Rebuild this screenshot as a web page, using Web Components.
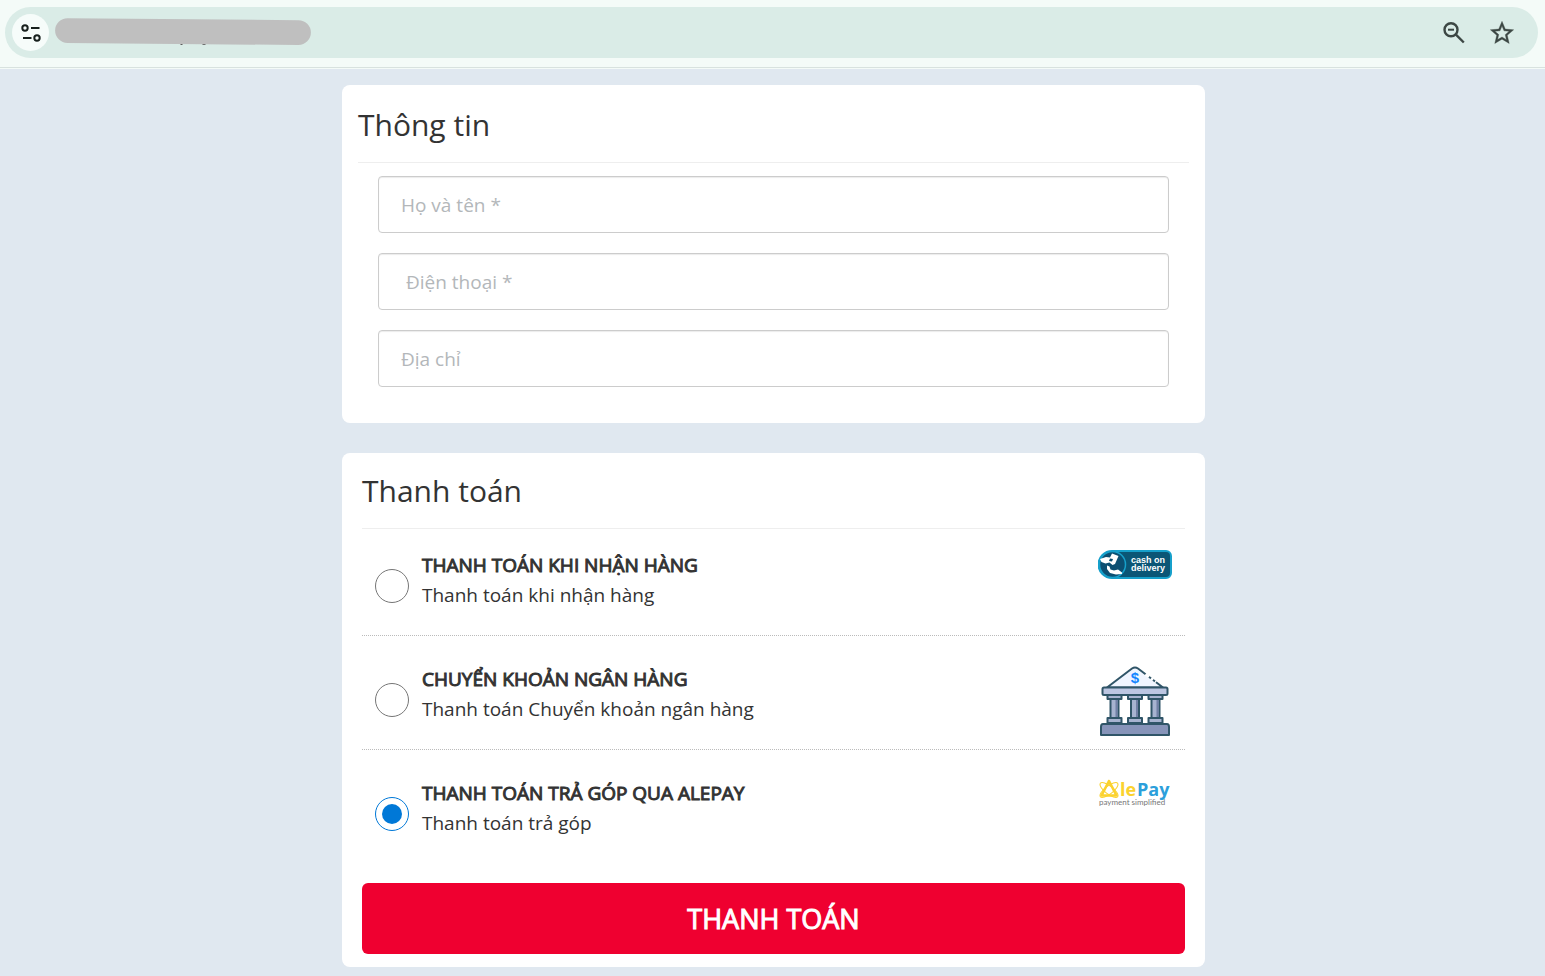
<!DOCTYPE html>
<html lang="vi">
<head>
    <meta charset="utf-8">
    <meta name="viewport" content="width=device-width, initial-scale=1">
    <title>Thanh toán</title>
    <style>
        body {
            margin: 0;
            min-height: 100vh;
            background: #e0e8f0;
            color: #333;
            font-family: "Open Sans", sans-serif;
            font-size: 19px;
            line-height: 30px;
        }
    </style>
</head>
<body>
    <browser-bar></browser-bar>
    <checkout-page>
        <checkout-card heading="Thông tin">
            <customer-form></customer-form>
        </checkout-card>
        <checkout-card heading="Thanh toán" class="payment">
            <payment-list>
                <payment-option value="cod">
                    <span slot="title">Thanh toán khi nhận hàng</span>
                    Thanh toán khi nhận hàng
                    <cod-logo slot="logo"></cod-logo>
                </payment-option>
                <payment-option value="bank">
                    <span slot="title">Chuyển khoản ngân hàng</span>
                    Thanh toán Chuyển khoản ngân hàng
                    <bank-logo slot="logo"></bank-logo>
                </payment-option>
                <payment-option value="alepay" checked>
                    <span slot="title">Thanh toán trả góp qua Alepay</span>
                    Thanh toán trả góp
                    <alepay-logo slot="logo"></alepay-logo>
                </payment-option>
            </payment-list>
            <pay-button>Thanh toán</pay-button>
        </checkout-card>
    </checkout-page>

    <script>
        class BrowserBar extends HTMLElement {
            constructor() {
                super();
                this.attachShadow({ mode: "open" });

                this.shadowRoot.innerHTML = `
                    <style>
                        :host {
                            display: block;
                            padding: 7px 7px 9px 5px;
                            background: #f4fbf8;
                            border-bottom: 1px solid #d8e2df;
                            box-shadow: 0 1px #f4fbf8;
                        }
                        .bar {
                            display: flex;
                            align-items: center;
                            height: 51px;
                            padding: 0 22px 0 7px;
                            border-radius: 26px;
                            background: #daece7;
                        }
                        button {
                            display: flex;
                            align-items: center;
                            justify-content: center;
                            width: 28px;
                            height: 28px;
                            padding: 0;
                            border: 0;
                            border-radius: 50%;
                            background: none;
                            color: #3c4744;
                        }
                        .site {
                            width: 37px;
                            height: 37px;
                            background: #f6fcfa;
                            color: #17201d;
                        }
                        .address {
                            flex: 1;
                            margin-left: 6px;
                        }
                        .address svg {
                            display: block;
                        }
                        .actions {
                            display: flex;
                            gap: 20px;
                        }
                    </style>
                    <div class="bar">
                        <button class="site" type="button" aria-label="Site information">
                            <svg width="20" height="20" viewBox="0 0 20 20" fill="none" stroke="currentColor" stroke-width="2">
                                <circle cx="4" cy="5" r="2.7"/>
                                <path d="M10 5h8.5M2 15h8.5"/>
                                <circle cx="16" cy="15" r="2.7"/>
                            </svg>
                        </button>
                        <div class="address">
                            <svg width="256" height="30" viewBox="0 0 256 30">
                                <path d="M125.500 24.500h2v2.500h-2zM147.500 24.500h3v2.500h-3z" fill="#555"/>
                                <path d="M12.500 .2L243.500 2.200A12.400 12.400 0 0 1 243.500 27L12.500 25A12.400 12.400 0 0 1 12.500 .2z" fill="#bfbfbf"/>
                            </svg>
                        </div>
                        <div class="actions">
                            <button type="button" aria-label="Zoom">
                                <svg width="28" height="28" viewBox="0 0 28 28" fill="none" stroke="currentColor" stroke-width="2.400">
                                    <circle cx="11" cy="10.700" r="6.500"/>
                                    <path d="M15.700 15.400L23.800 23.500"/>
                                    <path d="M8 10.700h6" stroke-width="2"/>
                                </svg>
                            </button>
                            <button type="button" aria-label="Bookmark">
                                <svg width="28" height="28" viewBox="0 0 24 24" fill="currentColor" stroke="currentColor" stroke-width=".3">
                                    <path d="M22 9.240l-7.190-.62L12 2 9.190 8.630 2 9.240l5.460 4.730L5.820 21 12 17.270 18.180 21l-1.630-7.030L22 9.240zM12 15.400l-3.760 2.270 1-4.280-3.320-2.880 4.380-.38L12 6.100l1.710 4.040 4.380.38-3.320 2.880 1 4.280L12 15.400z"/>
                                </svg>
                            </button>
                        </div>
                    </div>
                `;
            }
        }

        class CheckoutPage extends HTMLElement {
            constructor() {
                super();
                this.attachShadow({ mode: "open" });

                this.shadowRoot.innerHTML = `
                    <style>
                        :host {
                            display: block;
                            padding: 17px 15px 9px 17px;
                        }
                        main {
                            display: grid;
                            gap: 30px;
                            max-width: 863px;
                            margin: 0 auto;
                        }
                    </style>
                    <main><slot></slot></main>
                `;
            }
        }

        class CheckoutCard extends HTMLElement {
            constructor() {
                super();
                this.attachShadow({ mode: "open" });

                this.shadowRoot.innerHTML = `
                    <style>
                        :host {
                            display: block;
                            padding: 20px 16px 36px;
                            border-radius: 8px;
                            background: #fff;
                        }
                        :host(.payment) {
                            padding: 18px 20px 13px;
                        }
                        h2 {
                            margin: 0;
                            padding-bottom: 17px;
                            border-bottom: 1px solid #eee;
                            font-size: 30px;
                            font-weight: 400;
                            line-height: 40px;
                        }
                    </style>
                    <h2></h2>
                    <slot></slot>
                `;
            }

            connectedCallback() {
                this.shadowRoot.querySelector("h2").textContent = this.getAttribute("heading");
            }
        }

        class CustomerForm extends HTMLElement {
            constructor() {
                super();
                this.attachShadow({ mode: "open" });

                this.shadowRoot.innerHTML = `
                    <style>
                        :host {
                            display: block;
                        }
                        form {
                            display: grid;
                            gap: 20px;
                            padding: 13px 20px 0;
                        }
                        input {
                            box-sizing: border-box;
                            width: 100%;
                            height: 57px;
                            padding: 0 22px;
                            border: 1px solid #ccc;
                            border-radius: 4px;
                            background: #fff;
                            box-shadow: inset 0 1px 1px rgba(0, 0, 0, .08);
                            color: #333;
                            font: inherit;
                        }
                        input::placeholder {
                            color: #b3b7ba;
                            opacity: 1;
                        }
                    </style>
                    <form>
                        <input type="text" name="name" placeholder="Họ và tên *" aria-label="Họ và tên" required>
                        <input type="tel" name="phone" placeholder=" Điện thoại *" aria-label="Điện thoại" required>
                        <input type="text" name="address" placeholder="Địa chỉ" aria-label="Địa chỉ">
                    </form>
                `;
            }
        }

        class PaymentList extends HTMLElement {
            constructor() {
                super();
                this.attachShadow({ mode: "open" });

                this.shadowRoot.innerHTML = `
                    <style>
                        :host {
                            display: grid;
                            gap: 7px;
                            margin-bottom: 19px;
                        }
                    </style>
                    <slot></slot>
                `;
            }

            connectedCallback() {
                this.setAttribute("role", "radiogroup");
                // radios in separate shadow roots don't group by name
                this.addEventListener("option-select", (e) => {
                    this.querySelectorAll("payment-option").forEach((option) => {
                        option.checked = option === e.target;
                    });
                });
            }
        }

        class PaymentOption extends HTMLElement {
            constructor() {
                super();
                this.attachShadow({ mode: "open" });

                this.shadowRoot.innerHTML = `
                    <style>
                        :host {
                            display: flex;
                            justify-content: space-between;
                            align-items: flex-start;
                            padding: 21px 13px 0;
                            border-bottom: 1px dotted #bbb;
                        }
                        :host(:last-of-type) {
                            border-bottom-color: transparent;
                        }
                        label {
                            display: flex;
                            flex: 1;
                            align-items: flex-start;
                            gap: 13px;
                            padding-bottom: 25px;
                        }
                        input {
                            appearance: none;
                            box-sizing: border-box;
                            flex: none;
                            width: 34px;
                            height: 34px;
                            margin: 19px 0 0;
                            padding: 6px;
                            border: 1px solid #767676;
                            border-radius: 50%;
                        }
                        input:checked {
                            border-color: #0078d7;
                        }
                        input:checked::before {
                            content: "";
                            display: block;
                            height: 100%;
                            border-radius: 50%;
                            background: #0078d7;
                        }
                        .title {
                            display: block;
                            text-transform: uppercase;
                            -webkit-text-stroke: 1px currentColor;
                        }
                        .text {
                            display: block;
                        }
                    </style>
                    <label>
                        <input type="radio" name="payment">
                        <span>
                            <span class="title"><slot name="title"></slot></span>
                            <span class="text"><slot></slot></span>
                        </span>
                    </label>
                    <slot name="logo"></slot>
                `;
                this.input = this.shadowRoot.querySelector("input");
            }

            connectedCallback() {
                this.input.value = this.getAttribute("value");
                this.input.checked = this.hasAttribute("checked");
                this.input.addEventListener("change", () => {
                    this.dispatchEvent(new CustomEvent("option-select", { bubbles: true }));
                });
            }

            set checked(value) {
                this.input.checked = value;
            }
        }

        class CodLogo extends HTMLElement {
            constructor() {
                super();
                this.attachShadow({ mode: "open" });

                this.shadowRoot.innerHTML = `
                    <style>
                        :host, svg {
                            display: block;
                        }
                        text {
                            font: bold 9px "Liberation Sans", sans-serif;
                        }
                    </style>
                    <svg width="74" height="30" viewBox="0 0 74 30">
                        <path d="M14 1h54a5 5 0 0 1 5 5v17a5 5 0 0 1-5 5H14A13.500 13.500 0 0 1 14 1z" fill="#0b5676" stroke="#16a0cb" stroke-width="2"/>
                        <circle cx="14.500" cy="14.500" r="13" fill="#0b4f72" stroke="#16a0cb" stroke-width="1.500"/>
                        <path d="M2 9l6-2 4 .5 2-4 6.500 2.500-3.500 8-2.500 1-3-2.500-4 1-4-1.500z" fill="#fff"/>
                        <path d="M12 8.500l3 .5-1 2.500-3-.5z" fill="#0b4f72"/>
                        <path d="M9 15.500l2.500 1 1 3 3.500 1 4-1 4 3v1.500l-6 .5-6-1.500-3-4z" fill="#fff"/>
                        <g fill="#fff">
                            <text x="33" y="13">cash on</text>
                            <text x="33" y="21">delivery</text>
                        </g>
                    </svg>
                `;
            }
        }

        class BankLogo extends HTMLElement {
            constructor() {
                super();
                this.attachShadow({ mode: "open" });

                this.shadowRoot.innerHTML = `
                    <style>
                        :host, svg {
                            display: block;
                        }
                        text {
                            font: bold 15px "Liberation Sans", sans-serif;
                        }
                    </style>
                    <svg width="74" height="74" viewBox="0 0 74 74" fill="#a7b3d0" stroke="#305568" stroke-width="2" stroke-linejoin="round">
                        <path d="M9 23.500L34 4.500q3-2 6 0L65 23.500z" fill="#f0f5ff"/>
                        <path d="M47.500 10.200l3.500 2.700M53 14.400l2 1.500M57 17.400l1 .8" stroke="#fff" stroke-width="3"/>
                        <rect x="4.500" y="23.500" width="65" height="7.500" rx="1.500" fill="#bcc6e2"/>
                        <path d="M12.500 35h8v19h-8zM33 35h8v19h-8zM53.500 35h8v19h-8z"/>
                        <path d="M9.500 31h14v4h-14zM30 31h14v4H30zM50.500 31h14v4h-14z"/>
                        <path d="M9.500 54h14v5h-14zM30 54h14v5H30zM50.500 54h14v5h-14z"/>
                        <path d="M18.500 36v17M39 36v17M59.500 36v17" stroke="#7180a5"/>
                        <path d="M5 60h64q2 0 2 3v8H3v-8q0-3 2-3z" fill="#8794b9"/>
                        <text x="37" y="19" text-anchor="middle" fill="#1586ff" stroke="none">$</text>
                    </svg>
                `;
            }
        }

        class AlepayLogo extends HTMLElement {
            constructor() {
                super();
                this.attachShadow({ mode: "open" });

                this.shadowRoot.innerHTML = `
                    <style>
                        :host, svg {
                            display: block;
                        }
                        .name {
                            font: bold 18px "Open Sans", sans-serif;
                        }
                        .motto {
                            font: 8px Lato, sans-serif;
                        }
                    </style>
                    <svg width="74" height="30" viewBox="0 0 74 30">
                        <g fill="none" stroke="#fbd22e" stroke-linejoin="round">
                            <path d="M11 3L3.500 17.500h15z" stroke-width="2.600"/>
                            <ellipse cx="11" cy="12" rx="11" ry="4" transform="rotate(38 11 12)"/>
                            <ellipse cx="11" cy="12" rx="11" ry="4" transform="rotate(-38 11 12)"/>
                        </g>
                        <text class="name" x="22" y="18" fill="#fbd22e">le</text>
                        <text class="name" x="39" y="18" fill="#2c9fdb">Pay</text>
                        <text class="motto" x="1" y="27" fill="#777">payment simplified</text>
                    </svg>
                `;
            }
        }

        class PayButton extends HTMLElement {
            constructor() {
                super();
                this.attachShadow({ mode: "open" });

                this.shadowRoot.innerHTML = `
                    <style>
                        :host {
                            display: block;
                        }
                        button {
                            display: block;
                            width: 100%;
                            padding: 16px;
                            border: 0;
                            border-radius: 6px;
                            background: #ef0030;
                            color: #fff;
                            font-family: inherit;
                            font-size: 27px;
                            line-height: 39px;
                            text-transform: uppercase;
                            -webkit-text-stroke: 1px currentColor;
                        }
                    </style>
                    <button type="button"><slot></slot></button>
                `;
            }
        }

        customElements.define("browser-bar", BrowserBar);
        customElements.define("checkout-page", CheckoutPage);
        customElements.define("checkout-card", CheckoutCard);
        customElements.define("customer-form", CustomerForm);
        customElements.define("payment-list", PaymentList);
        customElements.define("payment-option", PaymentOption);
        customElements.define("cod-logo", CodLogo);
        customElements.define("bank-logo", BankLogo);
        customElements.define("alepay-logo", AlepayLogo);
        customElements.define("pay-button", PayButton);
    </script>
</body>
</html>
